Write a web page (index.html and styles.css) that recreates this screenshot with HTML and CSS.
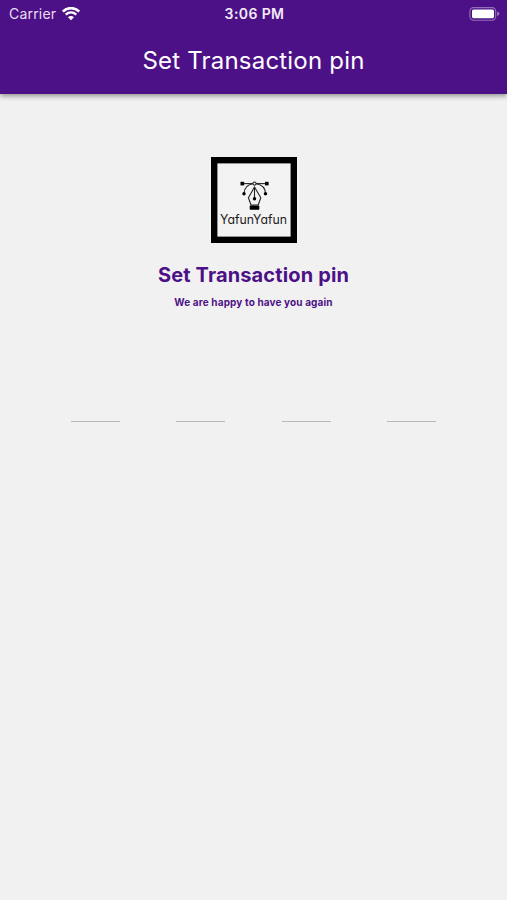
FILE: index.html
```html
<!DOCTYPE html>
<html lang="en">

<head>
<meta charset="UTF-8">
<meta name="viewport" content="width=device-width, initial-scale=1.0">
<title>Set Transaction pin</title>
<link rel="stylesheet" href="styles.css">
</head>

<body>

<header class="app-bar">
    <div class="status-bar">
        <div class="status-left">
            <span class="carrier">Carrier</span>
            <svg class="wifi" width="18" height="14" viewBox="0 0 18 14">
                <path d="M0.8 4.5 C5.4 0 12.6 0 17.2 4.5" fill="none" stroke="#fff" stroke-width="2.6"/>
                <path d="M3.7 7.6 C6.8 4.8 11.2 4.8 14.3 7.6" fill="none" stroke="#fff" stroke-width="2.4"/>
                <path d="M9 13.2 L6 10.3 C7.6 8.7 10.4 8.7 12 10.3 Z" fill="#fff"/>
            </svg>
        </div>
        <span class="time">3:06 PM</span>
        <div class="status-right">
            <svg class="battery" width="31" height="14" viewBox="0 0 31 14">
                <rect x="0.9" y="0.6" width="25.8" height="12.6" rx="3.6" fill="none" stroke="#fff" stroke-opacity="0.4" stroke-width="1.1"/>
                <rect x="3" y="2.4" width="22" height="8.8" rx="1.6" fill="#fff"/>
                <path d="M28.3 4.6 C30.9 5.6 30.9 8 28.3 9 Z" fill="#fff" fill-opacity="0.5"/>
            </svg>
        </div>
    </div>
    <h1 class="title">Set Transaction pin</h1>
</header>

<main class="content">
    <!-- Logo -->
    <svg class="logo" width="86" height="86" viewBox="0 0 86 86">
        <rect x="3.2" y="3.2" width="79.6" height="79.6" fill="#f3f3f3" stroke="#000" stroke-width="6.4"/>
        <g fill="none" stroke="#222" stroke-width="1.1">
            <path d="M31 26.6 H56"/>
            <path d="M33 36.5 C33.3 31 36.5 27.6 41.8 26.8"/>
            <path d="M54.5 36.5 C54.2 31 50.5 27.6 45.2 26.8"/>
            <path d="M43.5 30 L37.4 40.8 L40 48 H47.2 L49.8 40.8 Z"/>
            <path d="M43.5 30 V41"/>
            <circle cx="43.5" cy="26.6" r="1.6" fill="#f3f3f3"/>
        </g>
        <g fill="#000">
            <rect x="29.5" y="24.8" width="3.6" height="3.6"/>
            <rect x="54" y="24.8" width="3.6" height="3.6"/>
            <circle cx="33" cy="36.7" r="1.7"/>
            <circle cx="54.5" cy="36.7" r="1.7"/>
            <circle cx="43.5" cy="41.8" r="1.7"/>
            <rect x="38.7" y="48.5" width="9.6" height="4.2" rx="0.6"/>
        </g>
        <text class="logo-text" x="9" y="67" textLength="67" lengthAdjust="spacingAndGlyphs">YafunYafun</text>
    </svg>

    <h2 class="heading">Set Transaction pin</h2>
    <p class="subtitle">We are happy to have you again</p>

    <div class="pin-row">
        <div class="pin-field"></div>
        <div class="pin-field"></div>
        <div class="pin-field"></div>
        <div class="pin-field"></div>
    </div>
</main>

</body>

</html>
```

FILE: styles.css
```css
body {
    font-family: Inter, Roboto, sans-serif;
    background-color: #f1f1f1;
    margin: 0;
    height: 900px;
    overflow: hidden;
}

.app-bar {
    height: 94px;
    background-color: #4d1187;
    color: #ffffff;
    box-shadow: 0 2px 5px rgba(0, 0, 0, 0.4);
}

.status-bar {
    display: grid;
    grid-template-columns: 1fr auto 1fr;
    align-items: center;
    height: 27px;
    padding: 0 7px 0 9px;
    box-sizing: border-box;
}

.status-left {
    display: flex;
    align-items: center;
    gap: 6px;
}

.status-right {
    display: flex;
    justify-content: flex-end;
}

.carrier {
    font-size: 14px;
    letter-spacing: 0.2px;
    color: #eadff2;
}

.time {
    font-size: 14px;
    font-weight: 600;
    letter-spacing: 0.4px;
    color: #f3ebf8;
}

.title {
    margin: 17px 0 0;
    text-align: center;
    font-size: 24px;
    font-weight: 400;
    line-height: 33px;
    letter-spacing: 0.2px;
}

.content {
    display: flex;
    flex-direction: column;
    align-items: center;
    padding-top: 63px;
}

.logo {
    display: block;
}

.logo-text {
    font-family: Inter, sans-serif;
    font-size: 12.5px;
    font-weight: 400;
    font-feature-settings: "cv11";
    fill: #1c1c1c;
}

.heading {
    margin: 19px 0 0;
    font-size: 20px;
    font-weight: 700;
    line-height: 26px;
    letter-spacing: 0.14px;
    color: #4d1187;
}

.subtitle {
    margin: 6px 0 0;
    font-size: 10px;
    font-weight: 700;
    line-height: 16px;
    letter-spacing: 0.13px;
    color: #4d1187;
}

.pin-row {
    display: flex;
    justify-content: space-between;
    width: 365px;
    margin-top: 71px;
}

.pin-field {
    width: 49px;
    height: 40px;
    border-bottom: 1px solid #b9b9b9;
}
```
